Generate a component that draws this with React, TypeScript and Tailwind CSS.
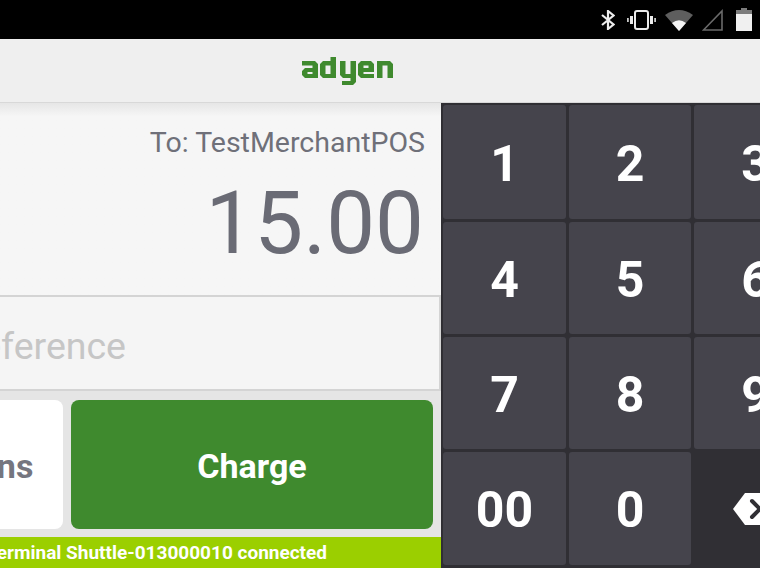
const KEYS = [
  ['1', '2', '3'],
  ['4', '5', '6'],
  ['7', '8', '9'],
];

function Key({ label }: { label: string }) {
  return (
    <div className="flex items-center justify-center rounded-[3px] bg-[#45444c] pt-[4px] text-[50px] font-bold text-white">
      {label}
    </div>
  );
}

function StatusIcons() {
  return (
    <div className="flex h-[39px] shrink-0 items-center justify-end bg-black pr-[8px]">
      <svg width="14" height="20" viewBox="0 0 14 20" fill="none" stroke="#ececec" strokeWidth="2.2" className="mr-[12px]">
        <path d="M1 5 L12.5 14.5 L7 19 V1 L12.5 5.5 L1 15" />
      </svg>
      <svg width="29" height="20" viewBox="0 0 29 20" className="mr-[9px]">
        <rect x="8" y="1" width="13" height="18" rx="2" fill="none" stroke="#ececec" strokeWidth="2" />
        <rect x="3" y="6" width="3" height="8" fill="#ececec" />
        <rect x="23" y="6" width="3" height="8" fill="#ececec" />
        <rect x="0" y="8" width="1.8" height="4" fill="#c8c8c8" />
        <rect x="27.2" y="8" width="1.8" height="4" fill="#c8c8c8" />
      </svg>
      <svg width="28" height="22" viewBox="0 0 28 22" className="mr-[9px]">
        <path d="M0 6 Q14 -4 28 6 L14 22 Z" fill="#5e5e5e" />
        <path d="M7 14 Q14 8.5 21 14 L14 22 Z" fill="#f4f4f4" />
      </svg>
      <svg width="21" height="22" viewBox="0 0 21 22" fill="none" stroke="#6a6a6a" strokeWidth="1.6" className="mr-[13px]">
        <path d="M1.5 21 L20 2 V21 Z" />
      </svg>
      <svg width="16" height="23" viewBox="0 0 16 23">
        <rect x="5" y="0" width="6" height="3" fill="#7c7c7c" />
        <rect x="0" y="2" width="16" height="5" fill="#7c7c7c" />
        <rect x="0" y="6" width="16" height="17" fill="#f0f0f0" />
      </svg>
    </div>
  );
}

function Logo() {
  return (
    <svg width="92" height="28" viewBox="0 0 92 28" fill="#3f8a2e" fillRule="evenodd">
      <path d="M1 4 H14 L17 7 V21 H4 L1 18 V14 L4 11 H11.5 V8.5 H1 Z M6.5 15 V17 H11.5 V15 Z" />
      <path d="M29.5 0 H35 V21 H22 L19 18 V7 L22 4 H29.5 Z M24.5 8.5 V17 H29.5 V8.5 Z" />
      <path d="M39 4 H44.5 V17 H49.5 V4 H55 V25 L52 28 H41 V24 H49.5 V21 H42 L39 18 Z" />
      <path d="M60 4 H70 L73 7 V15 H62.5 V17 H73 V21 H60 L57 18 V7 Z M62.5 8.5 V11 H67.5 V8.5 Z" />
      <path d="M76 4 H89 L92 7 V21 H86.5 V8.5 H81.5 V21 H76 Z" />
    </svg>
  );
}

export default function App() {
  return (
    <div className="flex h-[568px] w-[760px] flex-col overflow-hidden bg-[#f6f6f6] font-['Roboto',sans-serif]">
      <StatusIcons />

      <div className="relative z-10 flex h-[64px] shrink-0 items-center justify-center border-b border-[#d8d8d8] bg-[#efefef] pr-[66px]">
        <Logo />
      </div>

      <div className="flex min-h-0 flex-1">
        <div className="flex w-[441px] shrink-0 flex-col overflow-hidden">
          <div className="flex h-[192px] shrink-0 flex-col items-end bg-gradient-to-b from-[#e6e6e6] via-[#f6f6f6] via-[7%] to-[#f6f6f6]">
            <div className="mt-[22px] mr-[16px] text-[28.5px] leading-[36px] text-[#6f7079]">To: TestMerchantPOS</div>
            <div className="mt-[9px] mr-[17px] text-[87px] leading-[106px] text-[#6a6b75]">15.00</div>
          </div>

          <div className="flex h-[96px] shrink-0 items-center justify-end border-y-2 border-r-2 border-[#d4d4d4] bg-[#f5f5f5] pt-[6px] pr-[313px]">
            <div className="text-[37.5px] whitespace-nowrap text-[#c6c6c6]">Reference</div>
          </div>

          <div className="flex h-[146px] shrink-0 items-center justify-end gap-[8px] bg-[#e5e5e5] pr-[8px]">
            <div className="flex h-[129px] w-[178px] shrink-0 items-center justify-center rounded-[8px] bg-white pt-[4px] text-[34px] font-bold text-[#75767f]">
              Options
            </div>
            <div className="flex h-[129px] w-[362px] shrink-0 items-center justify-center rounded-[8px] bg-[#3f8a2e] pt-[4px] text-[34px] font-bold text-white">
              Charge
            </div>
          </div>

          <div className="flex h-[31px] shrink-0 items-center justify-end bg-[#9bcf00] pt-[2px] pr-[114px] text-[19px] font-bold whitespace-nowrap text-white">
            Terminal Shuttle-013000010 connected
          </div>
        </div>

        <div className="grid w-[319px] shrink-0 grid-cols-[123px_122px_123px] grid-rows-[114px_112px_112px_113px] gap-[3px] overflow-hidden border-l border-[#2f2e33] bg-[#302f34] pt-[2px] pl-[1px]">
          {KEYS.flat().map((k) => (
            <Key key={k} label={k} />
          ))}
          <Key label="00" />
          <Key label="0" />
          <div className="flex items-center pl-[39px]">
            <svg width="40" height="32" viewBox="0 0 40 32" className="shrink-0">
              <path d="M12 0 H40 V32 H12 L0 16 Z" fill="#fff" />
              <path d="M19 8 L35 24 M35 8 L19 24" stroke="#302f34" strokeWidth="4" strokeLinecap="round" />
            </svg>
          </div>
        </div>
      </div>
    </div>
  );
}
